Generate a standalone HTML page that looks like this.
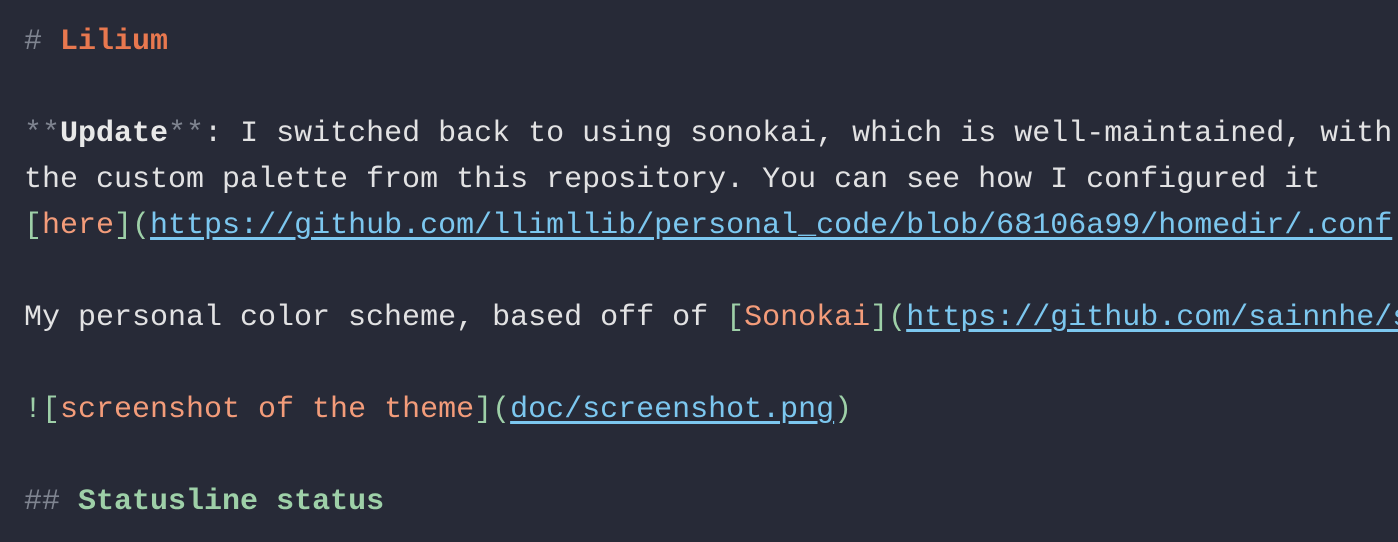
<!DOCTYPE html>
<html><head><meta charset="utf-8"><style>
html,body{margin:0;padding:0;background:#272a37;width:1398px;height:542px;overflow:hidden}
pre{margin:0;padding:19px 0 0 24px;width:1374px;height:523px;overflow:hidden;font-family:"Liberation Mono",monospace;font-size:30px;line-height:46px;color:#e2e2e3;white-space:pre}
.g{color:#7f8490}.h{color:#e8784f;font-weight:bold}.b{font-weight:bold;color:#e8e8e8}
.br{color:#9ed0a8}.lt{color:#f39c7a}.u{color:#7cc7ef;text-decoration:underline;text-underline-offset:4px}
.h2{color:#9ed0a8;font-weight:bold}
</style></head><body><pre><span class="g">#</span> <span class="h">Lilium</span>

<span class="g">**</span><span class="b">Update</span><span class="g">**</span>: I switched back to using sonokai, which is well-maintained, with
the custom palette from this repository. You can see how I configured it
<span class="br">[</span><span class="lt">here</span><span class="br">](</span><span class="u">https://github.com/llimllib/personal_code/blob/68106a99/homedir/.conf</span>

My personal color scheme, based off of <span class="br">[</span><span class="lt">Sonokai</span><span class="br">](</span><span class="u">https://github.com/sainnhe/so</span>

<span class="br">![</span><span class="lt">screenshot of the theme</span><span class="br">](</span><span class="u">doc/screenshot.png</span><span class="br">)</span>

<span class="g">##</span> <span class="h2">Statusline status</span></pre></body></html>
